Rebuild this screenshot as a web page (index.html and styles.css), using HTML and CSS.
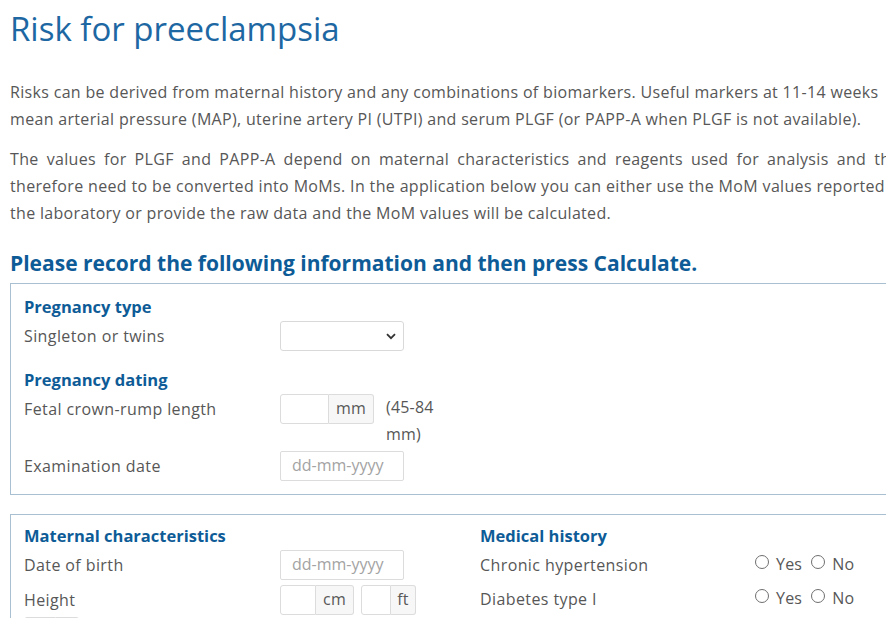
FILE: index.html
```html
<!DOCTYPE html>
<html lang="en">
<head>
<meta charset="utf-8">
<title>Risk for preeclampsia</title>
<link rel="stylesheet" href="styles.css">
</head>
<body>
<div class="page">
  <h1 class="title">Risk for preeclampsia</h1>
  <p class="intro">
    <span class="line last">Risks can be derived from maternal history and any combinations of biomarkers. Useful markers at 11-14 weeks</span>
    <span class="line last">mean arterial pressure (MAP), uterine artery PI (UTPI) and serum PLGF (or PAPP-A when PLGF is not available).</span>
  </p>
  <p class="intro">
    <span class="line">The values for PLGF and PAPP-A depend on maternal characteristics and reagents used for analysis and they</span>
    <span class="line">therefore need to be converted into MoMs. In the application below you can either use the MoM values reported by</span>
    <span class="line last">the laboratory or provide the raw data and the MoM values will be calculated.</span>
  </p>
  <h2 class="lead">Please record the following information and then press Calculate.</h2>

  <section class="panel panel-first">
    <div class="col">
      <h3 class="group-title">Pregnancy type</h3>
      <div class="row">
        <span class="label">Singleton or twins</span>
        <div class="select">
          <svg class="chevron" width="10" height="7" viewBox="0 0 10 7"><path d="M1 1.2 L5 5.2 L9 1.2" fill="none" stroke="#333" stroke-width="1.8"/></svg>
        </div>
      </div>
      <h3 class="group-title spaced">Pregnancy dating</h3>
      <div class="row">
        <span class="label">Fetal crown-rump length</span>
        <div class="group"><span class="field w49"></span><span class="addon w45">mm</span></div>
        <span class="note">(45-84 mm)</span>
      </div>
      <div class="row">
        <span class="label">Examination date</span>
        <span class="field date">dd-mm-yyyy</span>
      </div>
    </div>
  </section>

  <section class="panel panel-cols">
    <div class="col">
      <h3 class="group-title">Maternal characteristics</h3>
      <div class="row loose">
        <span class="label">Date of birth</span>
        <span class="field date">dd-mm-yyyy</span>
      </div>
      <div class="row wrap">
        <span class="label">Height</span>
        <div class="group"><span class="field w36"></span><span class="addon w38">cm</span></div>
        <div class="group"><span class="field w30"></span><span class="addon w25">ft</span></div>
        <div class="group"><span class="field w32"></span><span class="addon w23">in</span></div>
      </div>
    </div>
    <div class="col">
      <h3 class="group-title">Medical history</h3>
      <div class="row loose">
        <span class="label wide">Chronic hypertension</span>
        <span class="radios"><span class="radio"></span>Yes<span class="radio second"></span>No</span>
      </div>
      <div class="row">
        <span class="label wide">Diabetes type I</span>
        <span class="radios"><span class="radio"></span>Yes<span class="radio second"></span>No</span>
      </div>
    </div>
  </section>
</div>
</body>
</html>
```

FILE: styles.css
```css
html, body {
  margin: 0;
  padding: 0;
  background: #fff;
  overflow: hidden;
}
body {
  font-family: "Open Sans", "Noto Sans", sans-serif;
  font-size: 16px;
  letter-spacing: 0.2px;
  color: #575757;
}
.page {
  width: 898px;
  padding: 0 0 0 10px;
}
.title {
  margin: 8px 0 0;
  font-size: 33px;
  font-weight: 400;
  letter-spacing: 0;
  line-height: 41px;
  color: #1d67a3;
}
.intro {
  margin: 30px 0 0;
  line-height: 27px;
  letter-spacing: 0.32px;
}
.intro + .intro {
  margin-top: 13px;
}
.line {
  display: block;
  text-align: justify;
  text-align-last: justify;
  white-space: nowrap;
}
.line.last {
  text-align-last: left;
}
.lead {
  margin: 23px 0 6px;
  font-size: 21px;
  font-weight: 700;
  letter-spacing: 0;
  line-height: 27px;
  color: #0e5c97;
}
.panel {
  border: 1px solid #a9bfd2;
  padding: 11px 13px 10px;
  display: flex;
}
.panel-cols {
  margin-top: 19px;
  padding-top: 9px;
}
.col {
  width: 456px;
  flex: none;
}
.group-title {
  margin: 0 0 2px;
  font-size: 16.5px;
  font-weight: 700;
  letter-spacing: 0;
  line-height: 24px;
  color: #0e5c97;
}
.group-title.spaced {
  margin-top: 17px;
}
.row {
  display: flex;
  align-items: flex-start;
  line-height: 27px;
  margin-bottom: 3px;
}
.row.loose {
  margin-bottom: 5px;
}
.row.wrap {
  flex-wrap: wrap;
  row-gap: 2px;
  column-gap: 7px;
  width: 440px;
}
.label {
  width: 256px;
  flex: none;
  padding-top: 2px;
  letter-spacing: 0.4px;
}
.row.wrap .label {
  width: 249px;
}
.label.wide {
  width: 275px;
}
.select {
  width: 124px;
  height: 30px;
  box-sizing: border-box;
  border: 1px solid #d9d9d9;
  border-radius: 3px;
  display: flex;
  align-items: center;
  justify-content: flex-end;
  padding-right: 7px;
}
.group {
  display: flex;
  height: 30px;
}
.field {
  display: block;
  height: 30px;
  box-sizing: border-box;
  border: 1px solid #dcdcdc;
  border-radius: 3px 0 0 3px;
  background: #fff;
}
.field.date {
  width: 124px;
  border-radius: 2px;
  padding-left: 11px;
  line-height: 27px;
  letter-spacing: 0;
  color: #a3a3a3;
}
.addon {
  display: block;
  height: 30px;
  box-sizing: border-box;
  border: 1px solid #dcdcdc;
  border-left: none;
  border-radius: 0 3px 3px 0;
  background: #f7f7f7;
  text-align: center;
  line-height: 27px;
  color: #595959;
}
.w49 { width: 49px; }
.w45 { width: 45px; }
.w36 { width: 36px; }
.w38 { width: 38px; }
.w30 { width: 30px; }
.w25 { width: 25px; }
.w32 { width: 32px; }
.w23 { width: 23px; }
.note {
  width: 60px;
  margin-left: 12px;
}
.radios {
  display: flex;
  align-items: center;
  white-space: pre;
  padding-top: 1px;
}
.radio {
  width: 12px;
  height: 12px;
  border: 1px solid #6f6f6f;
  border-radius: 50%;
  margin: -5px 7px 0 0;
}
.radio.second {
  margin-left: 9px;
}
```
